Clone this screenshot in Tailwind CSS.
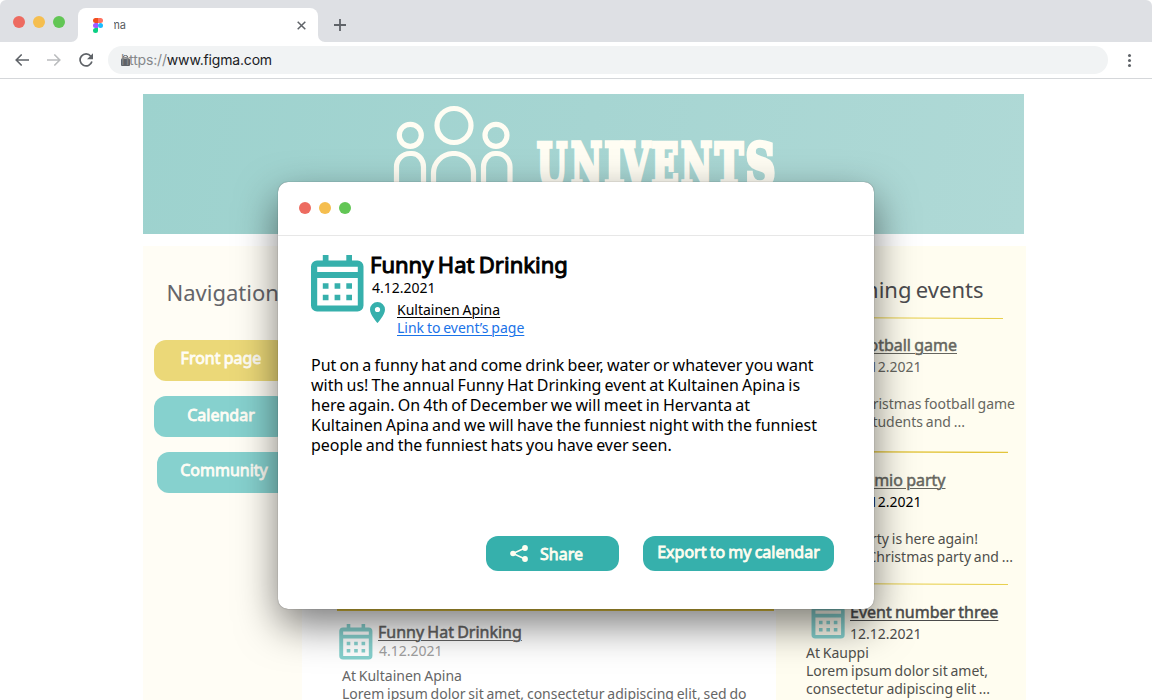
<!DOCTYPE html>
<html lang="en">
<head>
<meta charset="utf-8">
<title>Univents</title>
<script src="https://cdn.jsdelivr.net/npm/@tailwindcss/browser@4"></script>
</head>
<body class="h-[700px] w-[1152px] overflow-hidden bg-white font-['Noto_Sans',sans-serif] [&_*]:[word-spacing:-0.06em]">
<svg width="0" height="0" class="absolute">
  <symbol id="calendar" viewBox="0 0 53 57">
    <path fill="currentColor" fill-rule="evenodd" d="M11.8 0h5.7v5.4h17.8V0H41v5.4h5.5a6 6 0 0 1 6 6v39a6 6 0 0 1-6 6H6a6 6 0 0 1-6-6v-39a6 6 0 0 1 6-6h5.800zM6.200 11.700V17h40.600v-5.300zM6.200 23v27.500h40.600V23z"/>
    <path fill="currentColor" d="M11.800 28.300h5.700v5.500h-5.700zm11.800 0h5.700v5.500h-5.700zm11.700 0H41v5.500h-5.700zM11.800 39.700h5.700v5.600h-5.700zm11.800 0h5.700v5.600h-5.700zm11.700 0H41v5.600h-5.700z"/>
  </symbol>
</svg>
<div class="relative h-[700px] w-[1152px] overflow-hidden rounded-md bg-white">
  <header class="font-[Inter,sans-serif]">
    <div class="flex h-[42px] items-start bg-[#dee0e4]">
      <div class="mt-4 ml-[13px] flex gap-2">
        <span class="size-3 rounded-full bg-[#ed6b60]"></span>
        <span class="size-3 rounded-full bg-[#f5be4f]"></span>
        <span class="size-3 rounded-full bg-[#62c655]"></span>
      </div>
      <div class="mt-2 ml-[6px] flex h-[34px] items-end">
        <svg class="h-[7px] w-[7px]" viewBox="0 0 7 7"><path d="M7 0v7H0a7 7 0 0 0 7-7z" fill="#fff"/></svg>
        <div class="flex h-[34px] w-[240px] items-center rounded-t-lg bg-white">
          <svg class="ml-[15px] h-[15px] w-[10px]" viewBox="0 0 10 15">
            <path d="M5 0H2.500a2.500 2.500 0 0 0 0 5H5z" fill="#f24e1e"/>
            <path d="M5 0h2.500a2.500 2.500 0 0 1 0 5H5z" fill="#ff7262"/>
            <path d="M5 5H2.500a2.500 2.500 0 0 0 0 5H5z" fill="#a259ff"/>
            <circle cx="7.500" cy="7.500" r="2.500" fill="#1abcfe"/>
            <path d="M5 10H2.500A2.500 2.500 0 1 0 5 12.500z" fill="#0acf83"/>
          </svg>
          <div class="ml-[11px] flex w-[12px] justify-end overflow-hidden text-[11px] leading-4 text-[#5a5d61]">ma</div>
          <svg class="ml-[171px] size-[9px]" viewBox="0 0 9 9"><path d="M.7.7l7.600 7.600M8.300.7L.7 8.300" stroke="#5f6368" stroke-width="1.500"/></svg>
        </div>
        <svg class="h-[7px] w-[7px]" viewBox="0 0 7 7"><path d="M0 0v7h7a7 7 0 0 1-7-7z" fill="#fff"/></svg>
      </div>
      <svg class="mt-[19px] ml-[9px] size-3" viewBox="0 0 12 12"><path d="M6 0v12M0 6h12" stroke="#5f6368" stroke-width="1.800"/></svg>
    </div>
    <div class="flex h-[37px] items-center border-b border-[#d5d7da]">
      <svg class="ml-[15px] h-[12px] w-[14px]" viewBox="0 0 14 12"><path d="M14 6H1.500M6.700.5L1.200 6l5.500 5.500" fill="none" stroke="#5f6368" stroke-width="1.600"/></svg>
      <svg class="ml-[18px] h-[12px] w-[14px]" viewBox="0 0 14 12"><path d="M0 6h12.500M7.300.5L12.800 6l-5.500 5.500" fill="none" stroke="#babcbe" stroke-width="1.600"/></svg>
      <svg class="ml-[18px] size-[14px]" viewBox="0 0 14 14"><path d="M11.800 3.200A6 6 0 1 0 12.900 8.500" fill="none" stroke="#5f6368" stroke-width="1.700"/><path d="M14 .3v6H8z" fill="#5f6368"/></svg>
      <div class="ml-[15px] flex h-7 w-[1000px] items-center rounded-full bg-[#f1f3f4] pl-[13px] text-[14px] leading-5">
        <svg class="h-[11px] w-[9px]" viewBox="0 0 9 11"><path d="M2.200 4V2.700a2.300 2.300 0 0 1 4.600 0V4" fill="none" stroke="#5f6368"/><rect y="3.600" width="9" height="7.400" rx="1" fill="#5f6368"/></svg>
        <div class="ml-[-9px] whitespace-nowrap tracking-[-0.17px] text-[#202124]"><span class="text-[#85888b]">https://</span>www.figma.com</div>
      </div>
      <div class="ml-[20px] flex flex-col gap-[2px]">
        <span class="size-[3px] rounded-full bg-[#5f6368]"></span>
        <span class="size-[3px] rounded-full bg-[#5f6368]"></span>
        <span class="size-[3px] rounded-full bg-[#5f6368]"></span>
      </div>
    </div>
  </header>

  <main class="ml-[143px] h-[621px] w-[883px] overflow-hidden pt-[15px]">
    <div class="h-[140px] w-[881px] bg-[linear-gradient(100deg,#9dd2ce,#a6d5d2_50%,#afd9d6)]">
      <svg width="881" height="140" viewBox="143 94 881 140" fill="none" stroke="#fffdf3" stroke-width="5.200">
        <circle cx="410.300" cy="135.300" r="11"/>
        <circle cx="454" cy="125.500" r="17"/>
        <circle cx="496" cy="135.300" r="11"/>
        <path d="M396.500 200v-33a13.500 13.500 0 0 1 13.500-13.500h2a11.500 13.500 0 0 1 11.500 13.500v33M433.500 200v-27a20 20 0 0 1 19-19.500h3a20 20 0 0 1 18 19.500v27M483.500 200v-33a11.500 13.500 0 0 1 11.500-13.500h2a13 13.500 0 0 1 13 13.500v33"/>
        <g fill="#fffdf3" stroke-width="4.500" stroke-linejoin="miter" font-family="DejaVu Serif" font-weight="700" font-size="57">
          <text x="537" y="184.500" textLength="30" lengthAdjust="spacingAndGlyphs">U</text>
          <text x="571" y="184.500" textLength="31" lengthAdjust="spacingAndGlyphs">N</text>
          <text x="604.500" y="184.500" textLength="20" lengthAdjust="spacingAndGlyphs">I</text>
          <text x="622" y="184.500" textLength="28" lengthAdjust="spacingAndGlyphs">V</text>
          <text x="651.500" y="184.500" textLength="27" lengthAdjust="spacingAndGlyphs">E</text>
          <text x="681" y="184.500" textLength="31" lengthAdjust="spacingAndGlyphs">N</text>
          <text x="715" y="184.500" textLength="28" lengthAdjust="spacingAndGlyphs">T</text>
          <text x="745.500" y="184.500" textLength="30" lengthAdjust="spacingAndGlyphs">S</text>
        </g>
      </svg>
    </div>
    <div class="mt-3 flex h-[454px]">
      <nav class="w-[159px] shrink-0 overflow-hidden bg-[#fffdf5] pt-[30px]">
        <h2 class="ml-[23.500px] text-[22px] leading-8 text-[#65656a]">Navigation</h2>
        <div class="mt-8 flex flex-col gap-[15px] text-center text-base leading-[37px] text-[#fffdf5] [-webkit-text-stroke:0.8px_#fffdf5]">
          <div class="ml-[11px] h-[41px] w-[134px] rounded-xl bg-[#ebd878]">Front page</div>
          <div class="ml-[11px] h-[41px] w-[134px] rounded-xl bg-[#86d1ce] leading-[38px]">Calendar</div>
          <div class="ml-[14px] h-[41px] w-[134px] rounded-xl bg-[#86d1ce]">Community</div>
        </div>
      </nav>
      <section class="w-[474px] shrink-0 overflow-hidden pt-[363px]">
        <div class="ml-[35px] h-[2px] w-[437px] bg-[#e3c43e]"></div>
        <div class="mt-[13px] ml-[37px] flex">
          <svg class="h-9 w-[34px] text-[#86d1ce]"><use href="#calendar"/></svg>
          <div class="ml-[5px]">
            <div class="mt-[-2px] text-base leading-5 text-[#626262] underline decoration-1 underline-offset-2 [-webkit-text-stroke:0.5px_#626262]">Funny Hat Drinking</div>
            <div class="ml-px text-[14px] leading-[18px] text-[#a0a0a0]">4.12.2021</div>
          </div>
        </div>
        <p class="mt-[7px] ml-10 text-[14px] leading-[18px] whitespace-nowrap text-[#666]">At Kultainen Apina<br>Lorem ipsum dolor sit amet, consectetur adipiscing elit, sed do</p>
      </section>
      <aside class="w-[250px] shrink-0 overflow-hidden bg-[#fffdf0] pt-[27px] text-[14px] leading-[18px] text-[#66665f]">
        <h2 class="mr-[42.500px] text-right text-[22px] leading-8 text-[#4b4b4e]">Upcoming events</h2>
        <svg class="mt-[12px] ml-[31px] block h-[2px] w-[196px]" viewBox="0 0 196 2"><path d="M0 .5L196 1.500" stroke="#e8d04f" stroke-width="1.100"/></svg>
        <div class="mt-[16px] mr-[69px] text-right text-base leading-5 underline decoration-1 underline-offset-2 [-webkit-text-stroke:0.5px_#66665f]">Football game</div>
        <div class="mt-[3px] mr-[104.500px] text-right">8.12.2021</div>
        <div class="mt-[19px] mr-[11px] text-right">A Christmas football game</div>
        <div class="mr-[61px] text-right">for students and ...</div>
        <svg class="mt-[20px] ml-[31px] block h-[2px] w-[201px]" viewBox="0 0 201 2"><path d="M0 .5L201 1.500" stroke="#e3c53c" stroke-width="1.300"/></svg>
        <div class="mt-[17px] mr-[80.500px] text-right text-base leading-5 underline decoration-1 underline-offset-2 [-webkit-text-stroke:0.5px_#66665f]">Remio party</div>
        <div class="mt-[3px] mr-[104.500px] text-right text-black">10.12.2021</div>
        <div class="mt-[19px] mr-[48px] text-right text-[#50504c]">The party is here again!</div>
        <div class="mr-[13px] text-right text-[#50504c]">The Christmas party and ...</div>
        <svg class="mt-[17px] ml-[31px] block h-[2px] w-[201px]" viewBox="0 0 201 2"><path d="M0 .5L201 1.500" stroke="#e8d04f" stroke-width="1.100"/></svg>
        <div class="mt-[17px] ml-[34.500px] flex text-[#4b4b4b]">
          <svg class="mt-px h-9 w-[34.500px] text-[#86d1ce]"><use href="#calendar"/></svg>
          <div class="ml-[5px]">
            <div class="text-base leading-5 whitespace-nowrap underline decoration-1 underline-offset-2 [-webkit-text-stroke:0.5px_#4b4b4b]">Event number three</div>
            <div class="mt-[3px]">12.12.2021</div>
          </div>
        </div>
        <p class="mt-px ml-[30px] whitespace-nowrap text-[#50504c]">At Kauppi<br>Lorem ipsum dolor sit amet,<br>consectetur adipiscing elit ...</p>
      </aside>
    </div>
  </main>

  <div class="absolute top-[182px] left-[278px] h-[427px] w-[596px] rounded-[10px] bg-white shadow-[0_0_1px_rgba(0,0,0,0.6),0_16px_40px_rgba(0,0,0,0.52)]">
    <div class="flex h-[54px] items-center gap-2 border-b border-[#e7e7e7] pb-px pl-[21px]">
      <span class="size-3 rounded-full bg-[#ed6b60]"></span>
      <span class="size-3 rounded-full bg-[#f5be4f]"></span>
      <span class="size-3 rounded-full bg-[#62c655]"></span>
    </div>
    <div class="flex pt-[19px] pl-[32.500px]">
      <svg class="h-[57px] w-[53px] text-[#36b0ac]"><use href="#calendar"/></svg>
      <div class="ml-[6.500px] text-[14px] leading-[18px] whitespace-nowrap text-black">
        <h1 class="mt-[-5px] mb-px text-[22px] leading-7 [-webkit-text-stroke:1px_black]">Funny Hat Drinking</h1>
        <div class="ml-[2px]">4.12.2021</div>
        <div class="mt-1 flex">
          <svg class="mt-px h-[21px] w-[15px]" viewBox="0 0 15 21"><path fill="#36b0ac" fill-rule="evenodd" d="M7.500 0A7.500 7.500 0 0 0 0 7.500C0 13 7.500 21 7.500 21S15 13 15 7.500A7.500 7.500 0 0 0 7.500 0zm0 4.900a2.600 2.600 0 1 1 0 5.200 2.600 2.600 0 0 1 0-5.200z"/></svg>
          <div class="ml-3"><span class="underline decoration-1 underline-offset-2">Kultainen Apina</span><br><span class="text-[#1a73e8] underline decoration-1 underline-offset-2">Link to event’s page</span></div>
        </div>
      </div>
    </div>
    <p class="mt-[18px] ml-[33px] text-base leading-5 whitespace-nowrap text-black">Put on a funny hat and come drink beer, water or whatever you want<br>with us! The annual Funny Hat Drinking event at Kultainen Apina is<br>here again. On 4th of December we will meet in Hervanta at<br>Kultainen Apina and we will have the funniest night with the funniest<br>people and the funniest hats you have ever seen.</p>
    <div class="mt-[81px] ml-[208px] flex gap-6 text-base text-[#fffdf0] [-webkit-text-stroke:0.8px_#fffdf0]">
      <div class="flex h-[35px] w-[133px] items-center rounded-xl bg-[#36b0ac] pl-6">
        <svg class="h-[17px] w-[18px]" viewBox="0 0 18 17"><g fill="#fffdf0"><circle cx="3" cy="8.500" r="2.800"/><circle cx="15" cy="3" r="2.900"/><circle cx="15" cy="14" r="2.900"/></g><path d="M15 3L3 8.500 15 14" stroke="#fffdf0" stroke-width="1.500" fill="none"/></svg>
        <span class="ml-3">Share</span>
      </div>
      <div class="h-[35px] w-[191px] rounded-xl bg-[#36b0ac] text-center leading-[33px] whitespace-nowrap">Export to my calendar</div>
    </div>
  </div>
</div>
</body>
</html>
